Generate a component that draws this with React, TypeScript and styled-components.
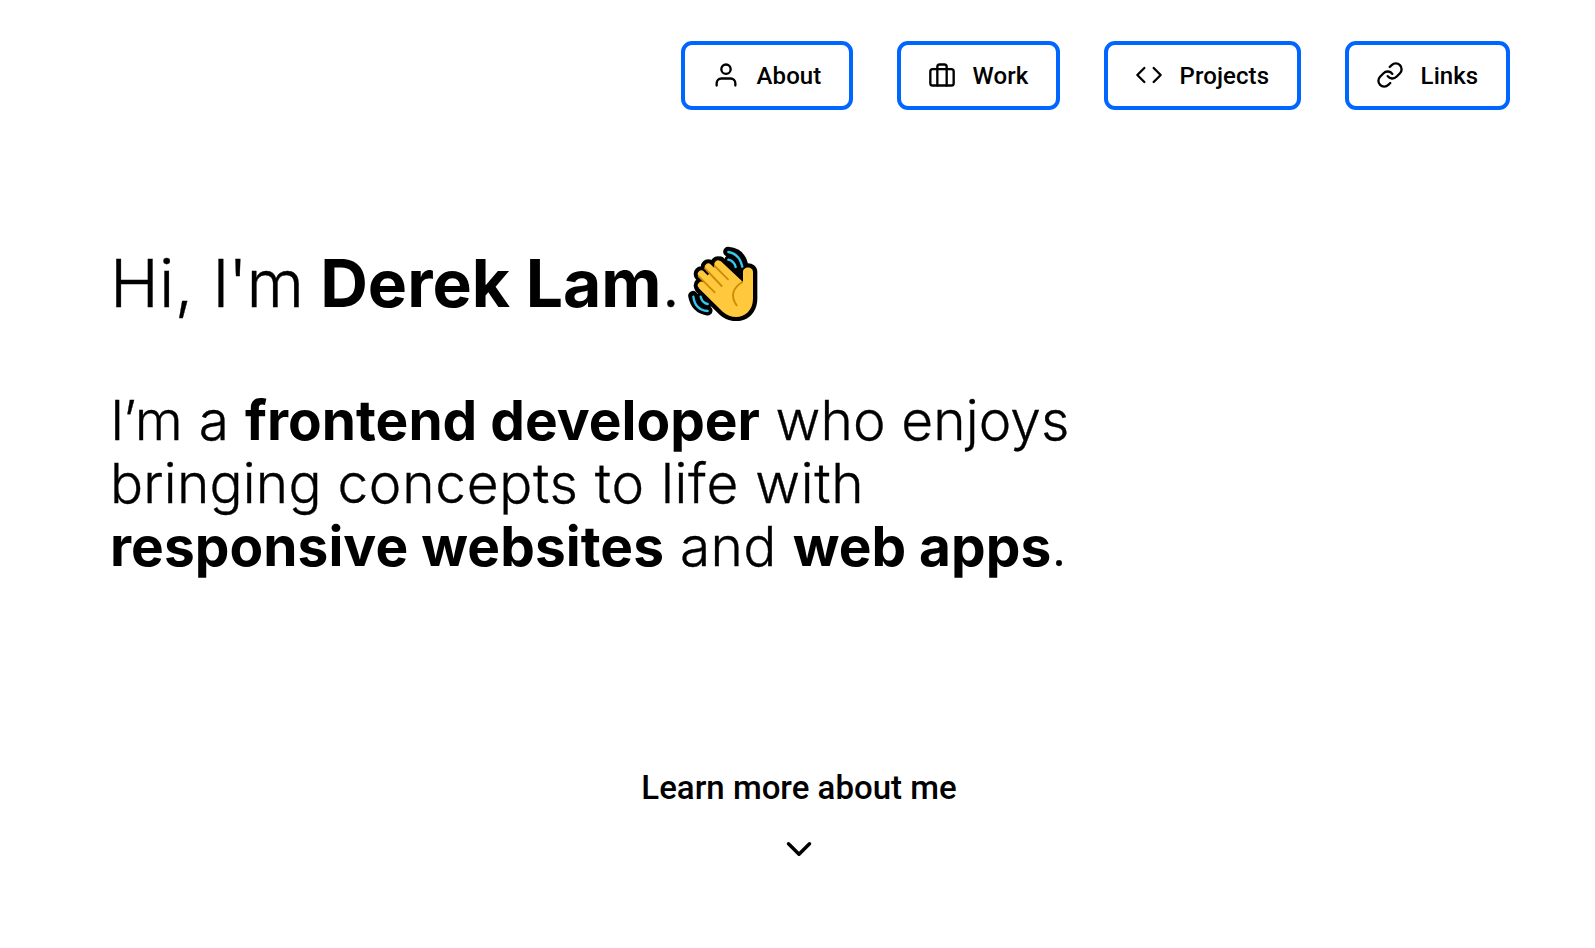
import React from "react";
import styled, { createGlobalStyle } from "styled-components";
import { FiUser, FiBriefcase, FiCode, FiLink, FiChevronDown } from "react-icons/fi";

const GlobalStyle = createGlobalStyle`
  * { box-sizing: border-box; }
  body { margin: 0; background: #fff; color: #000; overflow: hidden; }
`;

const Page = styled.div`
  height: 948px;
  display: flex;
  flex-direction: column;
`;

const Nav = styled.nav`
  display: flex;
  justify-content: flex-end;
  gap: 44px;
  padding: 41px 85px 0 0;
`;

const NavButton = styled.a<{ $width: number }>`
  display: flex;
  align-items: center;
  gap: 16.6px;
  width: ${(p) => p.$width}px;
  height: 69px;
  padding-left: 27px;
  border: 4px solid #0066ff;
  border-radius: 11px;
  font: 500 24px/28px Roboto, sans-serif;
  letter-spacing: 0.08px;
  white-space: nowrap;
  svg { flex: none; margin-bottom: 1px; }
`;

const Hero = styled.main`
  padding: 133px 0 0 110px;
`;

const Title = styled.h1`
  display: flex;
  align-items: flex-start;
  margin: 0;
  height: 80px;
  font: 300 66px/80px Inter, sans-serif;
  white-space: pre;
`;

const Wave = styled.svg`
  flex: none;
  width: 70px;
  height: 75px;
  margin: 3px 0 0 8px;
`;

const Light = styled.span<{ $spacing?: number }>`
  letter-spacing: ${(p) => p.$spacing ?? 0}px;
  -webkit-text-stroke: 0.35px #000;
`;

const Bold = styled.strong<{ $spacing?: number }>`
  font-weight: 700;
  letter-spacing: ${(p) => p.$spacing ?? 0}px;
`;

const Intro = styled.p`
  margin: 66px 0 0;
  font: 300 55px/63px Inter, sans-serif;
  white-space: nowrap;
`;

const LearnMore = styled.footer`
  display: flex;
  flex-direction: column;
  align-items: center;
  padding: 190px 0 0 3px;
  font: 500 33px/40px Roboto, sans-serif;
  svg { margin-top: 20px; }
`;

const links = [
  { label: "About", Icon: FiUser, width: 172 },
  { label: "Work", Icon: FiBriefcase, width: 163 },
  { label: "Projects", Icon: FiCode, width: 197 },
  { label: "Links", Icon: FiLink, width: 165 },
];

const PALM =
  "M152 79 L219 142 L219 112 C219 94 249 94 249 112 L249 192 C249 244 195 263 158 231 L87 161 L104 134 L136 94 Z";
const FINGERS = "M144 88 L180 124 M115 97 L165 147 M94 118 L150 174 M94 152 L140 197";

const WavingHand = () => (
  <Wave viewBox="54 34 210 225" role="img" aria-label="waving hand">
    <g fill="none" stroke="#000" strokeLinecap="round" strokeLinejoin="round">
      <path d={PALM} fill="#000" strokeWidth="26" />
      <path d={FINGERS} strokeWidth="46" />
      <g strokeWidth="29">
        <path d="M174 51 Q210 54 219 87" />
        <path d="M178 76 Q190 78 195 92 L210 116" />
        <path d="M69 183 Q76 222 113 228" />
        <path d="M94 186 Q98 200 112 206" />
      </g>
    </g>
    <path d={PALM} fill="#ffc83d" />
    <path d={FINGERS} fill="none" stroke="#ffc83d" strokeWidth="21" strokeLinecap="round" />
    <g fill="none" stroke="#cc8a08" strokeWidth="5.5" strokeLinecap="round">
      <path d="M134 94 L174 134" />
      <path d="M105 101 L155 154" />
      <path d="M86 125 L134 173" />
      <path d="M216 143 C190 159 179 184 200 212" />
    </g>
    <g fill="none" stroke="#35c8f0" strokeWidth="7" strokeLinecap="round">
      <path d="M175 52 Q209 58 217 96" />
      <path d="M175 75 Q192 79 197 97" />
      <path d="M70 186 Q75 226 113 229" />
      <path d="M92 186 Q96 204 113 208" />
    </g>
  </Wave>
);

export default function App() {
  return (
    <Page>
      <GlobalStyle />
      <Nav>
        {links.map(({ label, Icon, width }) => (
          <NavButton key={label} $width={width}>
            <Icon size={28} strokeWidth={2} />
            {label}
          </NavButton>
        ))}
      </Nav>
      <Hero>
        <Title>
          <span>
            <Light $spacing={0.2}>Hi, </Light>
            <Light $spacing={-1.2}>I'm </Light>
            <Bold>Derek Lam</Bold>
            <Light>.</Light>
          </span>
          <WavingHand />
        </Title>
        <Intro>
          <Light $spacing={-1.5}>I’</Light>
          <Light $spacing={0.3}>m a </Light>
          <Bold>frontend developer</Bold>
          <Light $spacing={0.1}> who enjoys</Light>
          <br />
          <Light $spacing={0.2}>bringing </Light>
          <Light $spacing={0.7}>concepts to life with</Light>
          <br />
          <Bold $spacing={0.05}>responsive websites</Bold>
          <Light $spacing={0.4}> and </Light>
          <Bold>web apps</Bold>
          <Light>.</Light>
        </Intro>
      </Hero>
      <LearnMore>
        Learn more about me
        <FiChevronDown size={42} />
      </LearnMore>
    </Page>
  );
}
